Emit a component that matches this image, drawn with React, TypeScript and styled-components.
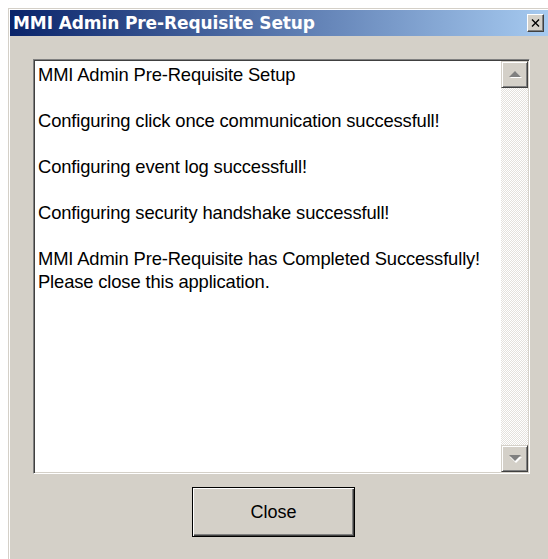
import React from "react";
import styled, { createGlobalStyle } from "styled-components";

const GlobalStyle = createGlobalStyle`
  html, body {
    margin: 0;
    padding: 0;
    background: #ffffff;
    overflow: hidden;
  }
  #root {
    width: 548px;
    height: 559px;
    overflow: hidden;
  }
`;

const Page = styled.div`
  width: 548px;
  height: 559px;
  padding: 8px 0 0 8px;
  box-sizing: border-box;
  overflow: hidden;
`;

const Window = styled.div`
  width: 560px;
  height: 600px;
  background: #d4d0c8;
  border-top: 1px solid #d4d0c8;
  border-left: 1px solid #d4d0c8;
  box-shadow: inset 1px 1px 0 #ffffff;
  padding: 1px 0 0 1px;
  box-sizing: border-box;
  display: flex;
  flex-direction: column;
`;

const TitleBar = styled.div`
  height: 26px;
  width: 538px;
  display: flex;
  align-items: center;
  justify-content: space-between;
  padding: 0 4px 0 3px;
  box-sizing: border-box;
  background: linear-gradient(to right, #0a246a 0%, #a6caf0 100%);
`;

const Title = styled.span`
  font-family: "DejaVu Sans", Tahoma, sans-serif;
  font-weight: bold;
  font-size: 17px;
  color: #ffffff;
  white-space: nowrap;
  letter-spacing: -0.1px;
`;

const CaptionButton = styled.div`
  width: 17px;
  height: 18px;
  box-sizing: border-box;
  background: #d4d0c8;
  border-top: 1px solid #ffffff;
  border-left: 1px solid #ffffff;
  border-right: 1px solid #404040;
  border-bottom: 1px solid #404040;
  box-shadow: inset -1px -1px 0 #808080;
  display: flex;
  align-items: center;
  justify-content: center;
`;

const Body = styled.div`
  display: flex;
  flex-direction: column;
  align-items: flex-start;
  padding: 23px 0 0 23px;
`;

const LogBox = styled.div`
  width: 497px;
  height: 415px;
  box-sizing: border-box;
  background: #ffffff;
  border-top: 1px solid #808080;
  border-left: 1px solid #808080;
  border-right: 1px solid #ffffff;
  border-bottom: 1px solid #ffffff;
  box-shadow: inset 1px 1px 0 #404040, inset -1px -1px 0 #d4d0c8;
  padding: 1px;
  display: flex;
`;

const LogText = styled.div`
  flex: 1;
  padding: 2px 3px;
  font-family: "Liberation Sans", Arial, sans-serif;
  font-size: 18.4px;
  line-height: 23px;
  color: #000000;
  white-space: pre-wrap;
  letter-spacing: -0.15px;
`;

const ScrollBar = styled.div`
  width: 27px;
  display: flex;
  flex-direction: column;
  background: conic-gradient(#e4e1dc 25%, #ffffff 0 50%, #e4e1dc 0 75%, #ffffff 0) 0 0 / 2px 2px;
`;

const Track = styled.div`
  flex: 1;
`;

const ArrowButton = styled.div`
  width: 27px;
  height: 27px;
  box-sizing: border-box;
  background: #d4d0c8;
  border-top: 1px solid #d4d0c8;
  border-left: 1px solid #d4d0c8;
  border-right: 1px solid #404040;
  border-bottom: 1px solid #404040;
  box-shadow: inset 1px 1px 0 #ffffff, inset -1px -1px 0 #808080;
  display: flex;
  align-items: center;
  justify-content: center;
`;

const Footer = styled.div`
  padding: 13px 0 0 159px;
`;

const PushButton = styled.button`
  width: 163px;
  height: 50px;
  box-sizing: border-box;
  background: #d4d0c8;
  border: 1px solid #000000;
  box-shadow: inset 1px 1px 0 #ffffff, inset -1px -1px 0 #404040, inset -2px -2px 0 #808080;
  font-family: "Liberation Sans", Arial, sans-serif;
  font-size: 18px;
  color: #000000;
  padding: 0;
  cursor: default;
`;

const Arrow: React.FC<{ down?: boolean }> = ({ down }) => (
  <svg width="14" height="9" viewBox="0 0 14 9">
    {down ? (
      <>
        <polygon points="1,2 13,2 7,8" fill="#ffffff" transform="translate(1,1)" />
        <polygon points="1,1 13,1 7,7" fill="#808080" />
      </>
    ) : (
      <>
        <polygon points="7,1 13,7 1,7" fill="#ffffff" transform="translate(1,1)" />
        <polygon points="7,1 13,7 1,7" fill="#808080" />
      </>
    )}
  </svg>
);

const CloseGlyph = () => (
  <svg width="9" height="8" viewBox="0 0 9 8">
    <path d="M1 0.5 L8 7.5 M8 0.5 L1 7.5" stroke="#000" strokeWidth="1.4" />
  </svg>
);

const log = `MMI Admin Pre-Requisite Setup

Configuring click once communication successfull!

Configuring event log successfull!

Configuring security handshake successfull!

MMI Admin Pre-Requisite has Completed Successfully!
Please close this application.`;

export default function App() {
  return (
    <>
      <GlobalStyle />
      <Page>
        <Window>
          <TitleBar>
            <Title>MMI Admin Pre-Requisite Setup</Title>
            <CaptionButton>
              <CloseGlyph />
            </CaptionButton>
          </TitleBar>
          <Body>
            <LogBox>
              <LogText>{log}</LogText>
              <ScrollBar>
                <ArrowButton>
                  <Arrow />
                </ArrowButton>
                <Track />
                <ArrowButton>
                  <Arrow down />
                </ArrowButton>
              </ScrollBar>
            </LogBox>
            <Footer>
              <PushButton>Close</PushButton>
            </Footer>
          </Body>
        </Window>
      </Page>
    </>
  );
}
